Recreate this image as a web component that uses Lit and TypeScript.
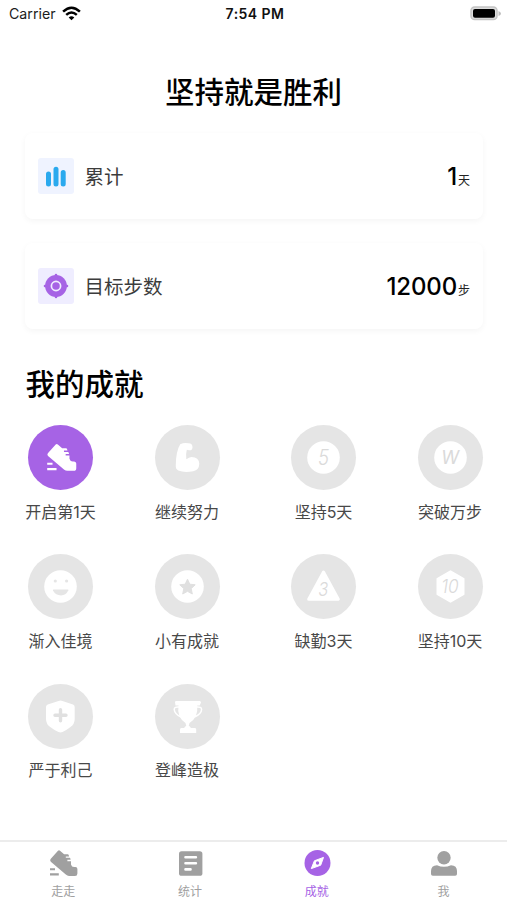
import { LitElement, html, css, svg } from "lit";
import { customElement } from "lit/decorators.js";

const shoe = svg`
  <path fill="currentColor" d="M8.2 .7Q9.2 -.3 10.2 .7L14.3 4.2H18Q19 4.3 19.3 6.4H16V7.8H20Q20.8 8.5 20.8 9.8H17.6V11.2H21.2V14.4Q21.8 17 24.3 17H25.6Q27.6 17.2 27.6 19V23.5Q27.6 26 25.2 26H19.2Q17.5 26 16 24.6L1 11.7Q-.2 10.4 .8 9Z"/>
  <path stroke="currentColor" stroke-width="2.1" d="M.2 19.2h5M.2 24.4h8.8"/>`;

const disc = svg`<circle cx="32.5" cy="32.5" r="16.3" fill="#fff"/>`;

const glyphs: Record<string, unknown> = {
  shoe: svg`<g transform="translate(19 18.8) scale(1.06 1.04)">${shoe}</g>`,
  arm: svg`<path fill="#fff" d="M25.2 19.2Q29 17.4 33.5 18.3Q37.5 18.3 37.5 22.4Q37.2 25.6 34 25.3L31.8 24.7Q30.7 28.5 31.3 34.3Q34 32.3 36.5 31.9Q44 31.9 44.3 38.8Q44.1 45.2 38.2 46.3Q29 48 23.3 45.5Q20.3 44 20.8 40Q21 26 25.2 19.2Z"/>`,
  five: svg`${disc}<text x="32.5" y="40.2" class="digit" textLength="11" lengthAdjust="spacingAndGlyphs">5</text>`,
  w: svg`${disc}<text x="32.2" y="39.2" class="digit w">W</text>`,
  smile: svg`${disc}<circle cx="27.3" cy="27" r="1.6" fill="#e5e5e5"/><circle cx="38.6" cy="27" r="1.6" fill="#e5e5e5"/><path fill="#e5e5e5" d="M25.6 35.6H40Q40.6 35.6 40.3 36.6Q37.8 41.5 33 41.5Q27.6 41.5 25 36.6Q24.8 35.6 25.6 35.6Z"/>`,
  star: svg`${disc}<path fill="#e0e0e0" stroke="#e0e0e0" stroke-linejoin="round" d="M32.5 25.2l2.3 5 5.4.6-4 3.8 1.1 5.4-4.8-2.7-4.8 2.7 1.1-5.4-4-3.8 5.4-.6z"/>`,
  triangle: svg`<path fill="#fff" stroke="#fff" stroke-width="3" stroke-linejoin="round" d="M32.5 18L47.3 45.2H17.7Z"/><text x="32.3" y="42" class="digit three" textLength="10" lengthAdjust="spacingAndGlyphs">3</text>`,
  hexagon: svg`<path fill="#fff" stroke="#fff" stroke-width="2" stroke-linejoin="round" d="M32.5 17.3L45.5 24.8V40.2L32.5 47.7L19.5 40.2V24.8Z"/><text x="32" y="39.2" class="digit ten" textLength="17.5" lengthAdjust="spacingAndGlyphs">10</text>`,
  shield: svg`<path fill="#fff" d="M30.5 16.9Q32.5 16.2 34.5 16.9L45 20.5Q46.7 21.2 46.7 23V35Q46.7 40 42.5 43Q38 46.5 34.5 48Q32.5 48.9 30.5 48Q26 46 22.2 43Q18 40 18 35V23Q18 21.2 19.7 20.5Z"/><path stroke="#e0e0e0" stroke-width="3.4" stroke-linecap="round" d="M27 31.2h11M32.5 25.7v11"/>`,
  trophy: svg`<path fill="#fff" d="M21.2 17H44.6Q46 17.2 46 18.5L44.7 21.5H20.5L20 18.3Q20 17 21.2 17ZM23.6 21H42.2Q43.5 33.5 34.5 39L33.5 43H31.5L30.5 39Q21.5 33 23.6 21ZM30.8 42H34.3L36 44H40Q41.2 44.2 41.2 45.5V49H25V45.5Q25 44.2 26.3 44H29Z"/><path fill="none" stroke="#fff" stroke-width="1.5" d="M24 23Q19.2 22.6 19.2 25.5Q19.6 30 26 33M41.5 23Q46.6 22.6 46.6 25.5Q46.4 30 39.5 33"/>`,
};

const badges = [
  ["shoe", "开启第1天"], ["arm", "继续努力"], ["five", "坚持5天"], ["w", "突破万步"],
  ["smile", "渐入佳境"], ["star", "小有成就"], ["triangle", "缺勤3天"], ["hexagon", "坚持10天"],
  ["shield", "严于利己"], ["trophy", "登峰造极"],
];

const tabs = [
  { label: "走走", icon: svg`<g transform="translate(.8 0)">${shoe}</g>` },
  { label: "统计", icon: svg`<rect x="3" y="1.2" width="23.4" height="24.6" rx="2.6" fill="currentColor"/><path stroke="#fff" stroke-width="2.6" stroke-linecap="round" d="M9.5 7.2h10.4M9.5 13.2h10.4M9.5 19.4h5"/>` },
  { label: "成就", icon: svg`<circle cx="14.5" cy="13" r="13" fill="currentColor"/><path fill="#fff" stroke="#fff" stroke-linejoin="round" d="M20.5 7.4L17.7 15.2L8.3 18.6L11.4 10.8Z"/><circle cx="14.5" cy="13" r="1.7" fill="currentColor"/>` },
  { label: "我", icon: svg`<circle cx="14" cy="7.8" r="6.7" fill="currentColor"/><path fill="currentColor" d="M1 21Q1 15.5 7 15.2Q14 18.3 21 15.2Q27 15.5 27 21V24Q27 25.8 25.2 25.8H2.8Q1 25.8 1 24Z"/>` },
];

@customElement("app-root")
export class AppRoot extends LitElement {
  static styles = css`
    :host { display: flex; flex-direction: column; height: 900px; box-sizing: border-box; overflow: hidden; background: #fff; color: #000; font-family: Inter, "Noto Sans CJK SC", sans-serif; }
    svg { display: block; overflow: visible; fill: none; }
    .status { display: grid; grid-template-columns: 1fr auto 1fr; align-items: center; height: 27px; padding: 0 6px 0 9px; font-size: 14.2px; color: #1c1c1c; }
    .carrier { display: flex; align-items: center; gap: 6px; }
    .time { font-weight: 600; font-size: 14px; letter-spacing: .45px; color: #111; }
    .battery { justify-self: end; }
    h1, h2 { margin: 0; font-weight: 500; font-size: 29.5px; line-height: 44px; }
    h1 { margin-top: 43px; text-align: center; }
    .cards { display: flex; flex-direction: column; gap: 24px; margin: 19px 24px 0 25px; }
    .card { display: flex; align-items: center; height: 86px; box-sizing: border-box; padding: 0 13px; border-radius: 8px; box-shadow: 0 2px 6px rgba(0,0,0,.045); }
    .tile { width: 36px; height: 36px; border-radius: 3px; background: #eff3ff; }
    .tile.violet { background: #efedff; }
    .name { flex: 1; margin: 0 0 1px 10.5px; font-size: 19.5px; color: #3c3c3c; }
    .value { display: flex; align-items: baseline; font-size: 24px; font-weight: 500; letter-spacing: -.15px; }
    .unit { font-size: 12px; font-weight: 400; color: #222; margin-left: 1px; letter-spacing: 0; }
    h2 { margin: 33px 0 0 25.5px; }
    .badges { display: grid; grid-template-columns: 126.5px 136.5px 126.5px 71px; grid-auto-rows: 105px; row-gap: 24.4px; margin: 19px 0 0 25px; }
    .badge { width: 71px; display: flex; flex-direction: column; align-items: center; }
    .medal { width: 65px; height: 65px; border-radius: 50%; background: #e5e5e5; color: #fff; }
    .medal.earned { background: #a663e5; }
    .label { margin-top: 9.5px; line-height: 24px; font-size: 16px; color: #484848; white-space: nowrap; }
    .digit { fill: #dadada; font: italic 300 21px Inter, sans-serif; text-anchor: middle; }
    .digit.three, .digit.ten { font-size: 19px; }
    .digit.w { font-size: 18px; font-weight: 400; }
    .tabs { display: grid; grid-template-columns: repeat(4, 1fr); height: 60px; box-sizing: border-box; margin-top: auto; border-top: 2px solid #ececec; }
    .tab { display: flex; flex-direction: column; align-items: center; padding-top: 8px; font-size: 12px; line-height: 18px; color: #a0a0a0; }
    .tab.active { color: #a663e5; }
    .tab svg { margin-bottom: 7px; }
  `;

  render() {
    return html`
      <div class="status">
        <div class="carrier">Carrier
          <svg width="19" height="15" viewBox="0 0 19 15"><path fill="#000" d="M9.5 14.2L6.7 11.4Q9.5 9.2 12.3 11.4Z"/><path stroke="#000" stroke-width="2.5" d="M1.1 5.6Q9.5 -2.2 17.9 5.6M4.2 8.9Q9.5 4.2 14.8 8.9"/></svg>
        </div>
        <div class="time">7:54 PM</div>
        <svg class="battery" width="31" height="15" viewBox="0 0 31 15"><rect x="1" y="1" width="26" height="12.6" rx="3.6" fill="#ddd" stroke="#c4c4c4" stroke-width="1.5"/><rect x="3" y="3" width="22" height="8.8" rx="2" fill="#000"/><path fill="#bdbdbd" d="M28.5 5Q31 6 31 7.5Q31 9 28.5 10Z"/></svg>
      </div>
      <h1>坚持就是胜利</h1>
      <div class="cards">
        <div class="card">
          <svg class="tile" viewBox="0 0 36 36"><path stroke="#2aa9ee" stroke-width="5" stroke-linecap="round" d="M10.5 16v10M18 11.2v14.8M25.2 14.5v11.5"/></svg>
          <span class="name">累计</span><span class="value">1<span class="unit">天</span></span>
        </div>
        <div class="card">
          <svg class="tile violet" viewBox="0 0 36 36"><circle cx="18" cy="18" r="10.9" fill="#a663e5"/><path stroke="#a663e5" stroke-width="2.6" stroke-linecap="round" d="M7 18h22M18 7v22"/><circle cx="18" cy="18" r="4.6" fill="#a663e5" stroke="#efedff" stroke-width="1.7"/></svg>
          <span class="name">目标步数</span><span class="value">12000<span class="unit">步</span></span>
        </div>
      </div>
      <h2>我的成就</h2>
      <div class="badges">
        ${badges.map(([kind, label], i) => html`<div class="badge">
          <svg class="medal ${i === 0 ? "earned" : ""}" viewBox="0 0 65 65">${glyphs[kind]}</svg>
          <div class="label">${label}</div></div>`)}
      </div>
      <nav class="tabs">
        ${tabs.map((t, i) => html`<div class="tab ${i === 2 ? "active" : ""}"><svg width="28" height="26" viewBox="0 0 28 26">${t.icon}</svg>${t.label}</div>`)}
      </nav>`;
  }
}
